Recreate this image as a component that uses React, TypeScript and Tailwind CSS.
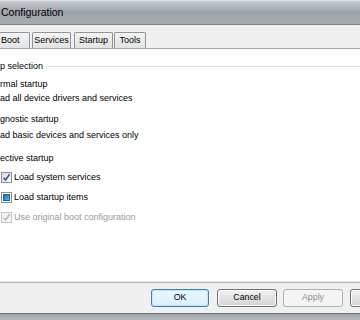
import React from "react";

function Check({ state }: { state: "checked" | "square" | "disabled" }) {
  if (state === "square") {
    return (
      <div className="w-[11px] h-[11px] border border-[#8e8f8f] bg-white p-[1px] shrink-0">
        <div className="w-full h-full bg-gradient-to-br from-[#1f6fb4] via-[#2f8fd0] to-[#64c0e8] border border-[#2a5f8e]" />
      </div>
    );
  }
  const disabled = state === "disabled";
  return (
    <div
      className={
        disabled
          ? "w-[11px] h-[11px] border border-[#c4c6c8] bg-[#f4f4f4] shrink-0 flex items-center justify-center"
          : "w-[11px] h-[11px] border border-[#8e8f8f] bg-gradient-to-br from-[#dcdcdc] to-[#fbfbfb] shrink-0 flex items-center justify-center"
      }
    >
      <svg width="9" height="9" viewBox="0 0 9 9">
        <path
          d="M1.5 4.8 L3.5 7 L7.6 1.2"
          fill="none"
          stroke={disabled ? "#b8b8b8" : "#2f4fa0"}
          strokeWidth="1.5"
        />
      </svg>
    </div>
  );
}

function Tab({ label, className }: { label: string; className?: string }) {
  return (
    <div
      className={
        "h-[16px] border border-b-0 border-[#8f939b] bg-gradient-to-b from-[#f4f4f4] to-[#e2e2e2] flex items-center text-[9px] text-black rounded-t-[2px] " +
        (className ?? "")
      }
    >
      {label}
    </div>
  );
}

function Btn({
  label,
  kind,
  className,
}: {
  label: string;
  kind: "default" | "normal" | "disabled";
  className?: string;
}) {
  const base =
    "h-[18px] rounded-[3px] flex items-center justify-center text-[8.8px] shrink-0 ";
  const k =
    kind === "default"
      ? "border border-[#3c7fb1] bg-gradient-to-b from-[#eaf6fd] to-[#d9f0fc] text-black shadow-[inset_0_0_0_1px_#c4e5f6]"
      : kind === "normal"
      ? "border border-[#707070] bg-gradient-to-b from-[#f2f2f2] to-[#d4d4d4] text-black shadow-[inset_0_0_0_1px_#fcfcfc]"
      : "border border-[#adb2b5] bg-[#f4f4f4] text-[#8d8d8d]";
  return <div className={base + k + " " + (className ?? "")}>{label}</div>;
}

export default function App() {
  return (
    <div
      className="w-[360px] h-[320px] overflow-hidden flex flex-col bg-[#f0f0f0] text-black"
      style={{ fontFamily: '"Liberation Sans", Arial, sans-serif' }}
    >
      {/* title bar */}
      <div className="h-[25px] shrink-0 bg-gradient-to-b from-[#c9cdd1] via-[#9ca2a9] to-[#a7acb1] border-t border-[#dfe2e5] border-b border-b-[#7d8389] flex items-center pl-[1px] text-[10.5px] text-black">
        Configuration
      </div>
      {/* tab strip */}
      <div className="h-[23px] shrink-0 bg-[#f0f0f0] border-t border-[#e9ebee] flex items-end">
        <Tab label="Boot" className="w-[38px] -ml-[8px] pl-[8px]" />
        <Tab label="Services" className="w-[39px] ml-[2px] justify-center" />
        <Tab label="Startup" className="w-[39px] ml-[3px] justify-center" />
        <Tab label="Tools" className="w-[32px] ml-[1px] justify-center" />
      </div>
      {/* tab page */}
      <div className="h-[235px] shrink-0 bg-white border-t border-b border-[#a3a7ae] border-b-[#b5b9bd] flex flex-col text-[9px] leading-[12px]">
        <div className="h-[223px] mt-[11px] flex flex-col border-b border-[#e2e8e4]">
          <div className="h-[12px] flex items-center">
            <span className="pr-[3px]">p selection</span>
            <div className="flex-1 h-px bg-[#d9dbdf]" />
          </div>
          <div className="h-[12px] mt-[6px] flex items-center">rmal startup</div>
          <div className="h-[12px] mt-[2px] flex items-center">ad all device drivers and services</div>
          <div className="h-[12px] mt-[9px] flex items-center">gnostic startup</div>
          <div className="h-[12px] mt-[4px] flex items-center">ad basic devices and services only</div>
          <div className="h-[12px] mt-[11px] flex items-center">ective startup</div>
          <div className="h-[14px] mt-[6px] flex items-center gap-[2px] pl-[1px]">
            <Check state="checked" />
            <span>Load system services</span>
          </div>
          <div className="h-[14px] mt-[6px] flex items-center gap-[2px] pl-[1px]">
            <Check state="square" />
            <span>Load startup items</span>
          </div>
          <div className="h-[14px] mt-[6px] flex items-center gap-[2px] pl-[1px]">
            <Check state="disabled" />
            <span className="text-[#9a9a9a]">Use original boot configuration</span>
          </div>
        </div>
      </div>
      {/* button row */}
      <div className="h-[30px] shrink-0 flex items-center pl-[151px]">
        <Btn label="OK" kind="default" className="w-[58px]" />
        <Btn label="Cancel" kind="normal" className="w-[60px] ml-[8px]" />
        <Btn label="Apply" kind="disabled" className="w-[60px] ml-[6px]" />
        <Btn label="" kind="normal" className="w-[60px] ml-[7px]" />
      </div>
      {/* bottom frame */}
      <div className="flex-1 border-t border-[#6f7378] bg-gradient-to-b from-[#9ea3a8] to-[#b9bdc1]" />
    </div>
  );
}
